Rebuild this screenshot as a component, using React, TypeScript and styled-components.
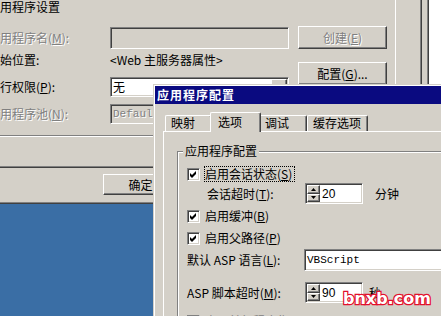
import styled, { createGlobalStyle, css } from 'styled-components';

const FACE = '#d4d0c8';
const SHADOW = '#808080';
const DARK = '#404040';
const HILITE = '#ffffff';
const NAVY = '#0a0a80';

const GlobalStyle = createGlobalStyle`
  html, body {
    margin: 0;
    padding: 0;
    background: #3a6ea5;
  }
`;

const sunken = css`
  border: 1px solid;
  border-color: ${SHADOW} ${HILITE} ${HILITE} ${SHADOW};
  box-shadow: inset 1px 1px 0 ${DARK}, inset -1px -1px 0 ${FACE};
`;

const raised = css`
  border: 1px solid;
  border-color: ${HILITE} ${DARK} ${DARK} ${HILITE};
  box-shadow: inset -1px -1px 0 ${SHADOW};
`;

const grayed = css`
  color: ${SHADOW};
  text-shadow: 1px 1px 0 ${HILITE};
`;

const Desktop = styled.div`
  position: relative;
  width: 441px;
  height: 316px;
  overflow: hidden;
  background: #3a6ea5;
  font-family: 'Noto Sans CJK SC', 'DejaVu Sans', sans-serif;
  font-size: 12px;
  line-height: 14px;
  color: #000;
`;

// some other white window peeking out on the right
const OtherWindow = styled.div`
  position: absolute;
  left: 429px;
  top: 0;
  width: 20px;
  height: 90px;
  background: #fff;
`;

/* ---------- property sheet in the back ---------- */

const BackWindow = styled.div`
  position: absolute;
  left: -12px;
  top: 0;
  width: 441px;
  height: 204px;
  box-sizing: border-box;
  display: flex;
  flex-direction: column;
  background: ${FACE};
  border-right: 1px solid ${DARK};
  border-bottom: 1px solid ${DARK};
  box-shadow: inset -1px -1px 0 ${SHADOW};
`;

const SheetPage = styled.div`
  flex: none;
  width: 434px;
  height: 168px;
  box-sizing: border-box;
  border-right: 1px solid ${DARK};
  border-bottom: 1px solid ${DARK};
  box-shadow: inset -1px -1px 0 ${SHADOW};
`;

const Settings = styled.div`
  display: flex;
  gap: 9px;
  width: 408px;
  height: 135px;
  box-sizing: border-box;
  border-right: 1px solid ${HILITE};
`;

const FieldList = styled.div`
  display: flex;
  flex-direction: column;
  width: 301px;
`;

const SectionTitle = styled.div`
  height: 14px;
  white-space: nowrap;
`;

const FieldRow = styled.div<{ $h: number; $mt: number }>`
  display: grid;
  grid-template-columns: 122px 1fr;
  align-items: center;
  height: ${p => p.$h}px;
  margin-top: ${p => p.$mt}px;
`;

const Label = styled.span<{ $disabled?: boolean }>`
  white-space: nowrap;
  ${p => p.$disabled && grayed};
`;

const TextBox = styled.div<{ $disabled?: boolean; $w?: number; $mono?: boolean }>`
  ${sunken};
  box-sizing: border-box;
  height: 100%;
  width: ${p => (p.$w ? `${p.$w}px` : '100%')};
  padding: 1px 1px 1px 2px;
  display: flex;
  align-items: center;
  overflow: hidden;
  white-space: nowrap;
  background: ${p => (p.$disabled ? FACE : '#fff')};
  ${p => p.$mono && css`
    font-family: 'Liberation Mono', 'Noto Sans CJK SC', monospace;
    font-size: 11px;
  `}
  ${p => p.$disabled && grayed};
`;

const DropButton = styled.span`
  ${raised};
  box-sizing: border-box;
  margin-left: auto;
  width: 16px;
  height: 100%;
  background: ${FACE};
  display: flex;
  align-items: center;
  justify-content: center;
`;

const ButtonColumn = styled.div`
  display: flex;
  flex-direction: column;
  gap: 13px;
  padding-top: 26px;
`;

const PushButton = styled.div<{ $w: number; $h: number; $disabled?: boolean }>`
  ${raised};
  box-sizing: border-box;
  width: ${p => p.$w}px;
  height: ${p => p.$h}px;
  background: ${FACE};
  display: flex;
  align-items: center;
  justify-content: center;
  white-space: nowrap;
  ${p => p.$disabled && grayed};
`;

const Separator = styled.div`
  height: 0;
  border-top: 1px solid ${SHADOW};
  border-bottom: 1px solid ${HILITE};
`;

const ButtonBar = styled.div`
  display: flex;
  padding: 6px 0 0 115px;
`;

const Acc = styled.span`
  text-decoration: underline;
  text-underline-offset: 1px;
`;

/* ---------- dialog in front ---------- */

const FrontWindow = styled.div`
  position: absolute;
  left: 153px;
  top: 84px;
  width: 330px;
  height: 260px;
  box-sizing: border-box;
  display: flex;
  flex-direction: column;
  padding: 1px 0 0 1px;
  background: ${FACE};
  border-top: 1px solid ${FACE};
  border-left: 1px solid ${FACE};
  box-shadow: inset 1px 1px 0 ${HILITE};
`;

const TitleBar = styled.div`
  flex: none;
  height: 18px;
  display: flex;
  align-items: center;
  padding-left: 2px;
  background: ${NAVY};
  color: #fff;
  font-weight: bold;
  letter-spacing: 1px;
`;

const FrontBody = styled.div`
  flex: 1;
  display: flex;
  flex-direction: column;
  padding: 8px 0 0 8px;
`;

const TabStrip = styled.div`
  flex: none;
  height: 19px;
  display: flex;
  align-items: flex-end;
  padding-left: 2px;
`;

const Tab = styled.div<{ $active?: boolean; $w: number }>`
  position: relative;
  z-index: ${p => (p.$active ? 1 : 0)};
  box-sizing: border-box;
  width: ${p => p.$w + (p.$active ? 4 : 0)}px;
  height: ${p => (p.$active ? 20 : 16)}px;
  margin: 0 ${p => (p.$active ? -2 : 0)}px ${p => (p.$active ? -1 : 0)}px;
  padding: ${p => (p.$active ? '2px 0 0 7px' : '0 0 0 5px')};
  background: ${FACE};
  border-top: 1px solid ${HILITE};
  border-left: 1px solid ${HILITE};
  border-right: 1px solid ${DARK};
  border-radius: 2px 2px 0 0;
  box-shadow: inset -1px 0 0 ${SHADOW};
  white-space: nowrap;
`;

const TabPage = styled.div`
  flex: 1;
  padding: 12px 0 0 13px;
  border-top: 1px solid ${HILITE};
  border-left: 1px solid ${HILITE};
`;

const GroupBox = styled.fieldset`
  margin: 0;
  min-width: 0;
  width: 320px;
  height: 300px;
  padding: 8px 0 0 9px;
  border: none;
  border-top: 1px solid ${SHADOW};
  border-left: 1px solid ${SHADOW};
  box-shadow: inset 1px 1px 0 ${HILITE};
`;

const GroupTitle = styled.legend`
  margin-left: -4px;
  padding: 0 2px;
  background: ${FACE};
  line-height: 14px;
`;

const CheckRow = styled.div<{ $mt: number }>`
  display: flex;
  align-items: center;
  height: 16px;
  margin-top: ${p => p.$mt}px;
`;

const CheckBox = styled.span<{ $disabled?: boolean }>`
  ${sunken};
  flex: none;
  box-sizing: border-box;
  width: 13px;
  height: 13px;
  background: ${p => (p.$disabled ? FACE : '#fff')};
`;

const CheckLabel = styled.span<{ $focus?: boolean; $disabled?: boolean }>`
  margin-left: 4px;
  padding-right: 2px;
  border: 1px dotted ${p => (p.$focus ? '#000' : 'transparent')};
  white-space: nowrap;
  ${p => p.$disabled && grayed};
`;

const OptionRow = styled.div<{ $h: number; $mt: number }>`
  display: grid;
  grid-template-columns: 118px auto 1fr;
  align-items: center;
  height: ${p => p.$h}px;
  margin-top: ${p => p.$mt}px;
`;

const OptionLabel = styled.span<{ $indent?: number }>`
  padding-left: ${p => p.$indent ?? 0}px;
  white-space: nowrap;
`;

const SpinBox = styled.div`
  ${sunken};
  box-sizing: border-box;
  width: 58px;
  height: 21px;
  padding: 1px;
  display: flex;
  background: #fff;
`;

const SpinButtons = styled.div`
  display: flex;
  flex-direction: column;
  width: 13px;
`;

const SpinButton = styled.span`
  ${raised};
  flex: 1;
  box-sizing: border-box;
  background: ${FACE};
  display: flex;
  align-items: center;
  justify-content: center;
`;

const SpinValue = styled.span`
  padding-left: 2px;
  font-family: 'Liberation Sans', 'DejaVu Sans', sans-serif;
  font-size: 12px;
  display: flex;
  align-items: center;
`;

const Unit = styled.span<{ $gap: number }>`
  margin-left: ${p => p.$gap}px;
  white-space: nowrap;
`;

const Watermark = styled.div`
  position: absolute;
  left: 343px;
  top: 290px;
  font-family: 'DejaVu Sans', sans-serif;
  font-weight: bold;
  font-size: 16px;
  line-height: 18px;
  color: #fff;
  -webkit-text-stroke: 2.5px #e2102c;
  paint-order: stroke fill;
`;

function Arrow({ up }: { up?: boolean }) {
  return (
    <svg width="5" height="3" viewBox="0 0 5 3">
      <polygon points={up ? '2.5,0 5,3 0,3' : '0,0 5,0 2.5,3'} fill="#000" />
    </svg>
  );
}

function Check({ checked, disabled }: { checked?: boolean; disabled?: boolean }) {
  return (
    <CheckBox $disabled={disabled}>
      {checked && (
        <svg width="11" height="11" viewBox="0 0 11 11" style={{ display: 'block' }}>
          <polygon points="2,4 4,6 8,2 8,5 4,9 2,7" fill="#000" />
        </svg>
      )}
    </CheckBox>
  );
}

function Spinner({ value }: { value: string }) {
  return (
    <SpinBox>
      <SpinButtons>
        <SpinButton>
          <Arrow up />
        </SpinButton>
        <SpinButton>
          <Arrow />
        </SpinButton>
      </SpinButtons>
      <SpinValue>{value}</SpinValue>
    </SpinBox>
  );
}

export default function App() {
  return (
    <>
      <GlobalStyle />
      <Desktop>
        <OtherWindow />

        <BackWindow>
          <SheetPage>
            <Settings>
              <FieldList>
                <SectionTitle>应用程序设置</SectionTitle>
                <FieldRow $h={22} $mt={13}>
                  <Label $disabled>
                    应用程序名(<Acc>M</Acc>):
                  </Label>
                  <TextBox $disabled />
                </FieldRow>
                <FieldRow $h={20} $mt={1}>
                  <Label>起始位置:</Label>
                  <Label>&lt;Web 主服务器属性&gt;</Label>
                </FieldRow>
                <FieldRow $h={20} $mt={7}>
                  <Label>
                    执行权限(<Acc>P</Acc>):
                  </Label>
                  <TextBox>
                    无
                    <DropButton>
                      <Arrow />
                    </DropButton>
                  </TextBox>
                </FieldRow>
                <FieldRow $h={20} $mt={7}>
                  <Label $disabled>
                    应用程序池(<Acc>N</Acc>):
                  </Label>
                  <TextBox $disabled $mono $w={120}>
                    DefaultAppPool
                  </TextBox>
                </FieldRow>
              </FieldList>
              <ButtonColumn>
                <PushButton $w={89} $h={23} $disabled>
                  创建(<Acc>E</Acc>)
                </PushButton>
                <PushButton $w={89} $h={23}>
                  配置(<Acc>G</Acc>)...
                </PushButton>
              </ButtonColumn>
            </Settings>
            <Separator />
          </SheetPage>
          <ButtonBar>
            <PushButton $w={75} $h={21}>
              确定
            </PushButton>
          </ButtonBar>
        </BackWindow>

        <FrontWindow>
          <TitleBar>应用程序配置</TitleBar>
          <FrontBody>
            <TabStrip>
              <Tab $w={47}>映射</Tab>
              <Tab $w={47} $active>
                选项
              </Tab>
              <Tab $w={48}>调试</Tab>
              <Tab $w={61}>缓存选项</Tab>
            </TabStrip>
            <TabPage>
              <GroupBox>
                <GroupTitle>应用程序配置</GroupTitle>
                <CheckRow $mt={0}>
                  <Check checked />
                  <CheckLabel $focus>
                    启用会话状态(<Acc>S</Acc>)
                  </CheckLabel>
                </CheckRow>
                <OptionRow $h={21} $mt={1}>
                  <OptionLabel $indent={20}>
                    会话超时(<Acc>T</Acc>):
                  </OptionLabel>
                  <Spinner value="20" />
                  <Unit $gap={12}>分钟</Unit>
                </OptionRow>
                <CheckRow $mt={4}>
                  <Check checked />
                  <CheckLabel>
                    启用缓冲(<Acc>B</Acc>)
                  </CheckLabel>
                </CheckRow>
                <CheckRow $mt={6}>
                  <Check checked />
                  <CheckLabel>
                    启用父路径(<Acc>P</Acc>)
                  </CheckLabel>
                </CheckRow>
                <OptionRow $h={22} $mt={3}>
                  <OptionLabel>
                    默认 ASP 语言(<Acc>L</Acc>):
                  </OptionLabel>
                  <TextBox $mono $w={200} style={{ marginLeft: -1 }}>
                    VBScript
                  </TextBox>
                </OptionRow>
                <OptionRow $h={21} $mt={11}>
                  <OptionLabel>
                    ASP 脚本超时(<Acc>M</Acc>):
                  </OptionLabel>
                  <Spinner value="90" />
                  <Unit $gap={6}>秒</Unit>
                </OptionRow>
                <CheckRow $mt={10}>
                  <Check disabled />
                  <CheckLabel $disabled>
                    启用并行程序集(<Acc>Y</Acc>)
                  </CheckLabel>
                </CheckRow>
              </GroupBox>
            </TabPage>
          </FrontBody>
        </FrontWindow>

        <Watermark>bnxb.com</Watermark>
      </Desktop>
    </>
  );
}
